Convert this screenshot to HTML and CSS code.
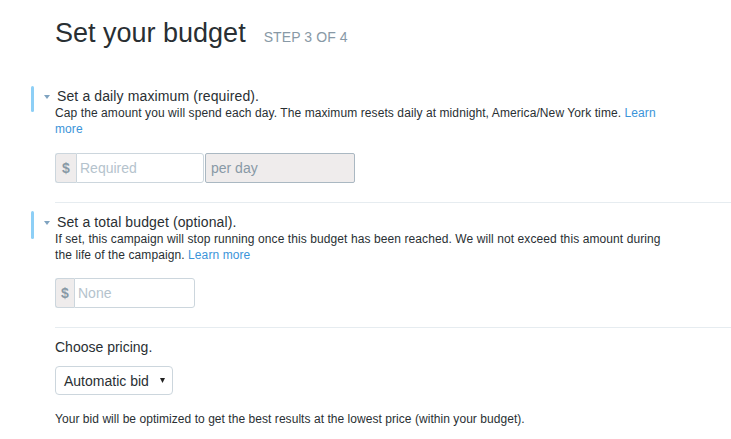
FILE: index.html
```html
<!DOCTYPE html>
<html>
<head>
<meta charset="utf-8">
<link rel="stylesheet" href="styles.css">
</head>
<body>
<div class="page">
  <div class="title-row">
    <h1 class="title">Set your budget</h1>
    <span class="step">STEP 3 OF 4</span>
  </div>

  <div class="section first">
    <div class="bar"></div>
    <div class="body">
      <div class="heading"><svg class="caret" width="6" height="4" viewBox="0 0 6 4"><path d="M0 0H6L3 4Z" fill="#7fa3c0"/></svg>Set a daily maximum (required).</div>
      <p class="desc">Cap the amount you will spend each day. The maximum resets daily at midnight, America/New York time. <a href="#">Learn more</a></p>
      <div class="input-row">
        <div class="group">
          <span class="addon">$</span>
          <span class="field w128">Required</span>
        </div>
        <span class="suffix">per day</span>
      </div>
    </div>
  </div>
  <div class="divider"></div>

  <div class="section second">
    <div class="bar"></div>
    <div class="body">
      <div class="heading"><svg class="caret" width="6" height="4" viewBox="0 0 6 4"><path d="M0 0H6L3 4Z" fill="#7fa3c0"/></svg>Set a total budget (optional).</div>
      <p class="desc">If set, this campaign will stop running once this budget has been reached. We will not exceed this amount during the life of the campaign. <a href="#">Learn more</a></p>
      <div class="input-row">
        <div class="group">
          <span class="addon">$</span>
          <span class="field w120">None</span>
        </div>
      </div>
    </div>
  </div>
  <div class="divider"></div>

  <div class="pricing">
    <div class="label">Choose pricing.</div>
    <div class="select"><span>Automatic bid</span><svg width="5" height="5" viewBox="0 0 5 5"><path d="M0 0H5L2.5 5Z" fill="#222"/></svg></div>
    <p class="note">Your bid will be optimized to get the best results at the lowest price (within your budget).</p>
  </div>
</div>
</body>
</html>
```

FILE: styles.css
```css
html, body {
  margin: 0;
  padding: 0;
  background: #fff;
}
body {
  font-family: "Liberation Sans", Arial, sans-serif;
  color: #292f33;
}
.page {
  padding: 17px 0 0 0;
}
.title-row {
  display: flex;
  align-items: baseline;
  padding-left: 55px;
}
.title {
  margin: 0;
  font-size: 27px;
  line-height: 32px;
  font-weight: normal;
  color: #292f33;
}
.step {
  margin-left: 18px;
  font-size: 14px;
  letter-spacing: 0.1px;
  color: #8899a6;
}
.section {
  display: flex;
  padding-left: 31px;
}
.section.first {
  margin-top: 37px;
}
.section.second {
  margin-top: 8px;
}
.bar {
  width: 3px;
  height: 26px;
  border-radius: 2px;
  background: #8dcff6;
  flex-shrink: 0;
}
.second .bar {
  height: 28px;
}
.body {
  margin-left: 21px;
  width: 615px;
}
.heading {
  display: flex;
  align-items: center;
  margin-top: 1px;
  margin-left: -11px;
  font-size: 14px;
  line-height: 18px;
  letter-spacing: 0.12px;
}
.second .heading {
  margin-top: 2px;
}
.caret {
  margin-right: 7px;
  margin-top: 1px;
  flex-shrink: 0;
}
.desc {
  margin: 0;
  font-size: 12px;
  line-height: 16px;
  letter-spacing: 0.09px;
}
.desc a {
  color: #3b94d9;
  text-decoration: none;
}
.input-row {
  display: flex;
  margin-top: 15px;
}
.first .input-row {
  margin-top: 16px;
}
.group {
  display: flex;
  height: 30px;
}
.addon {
  box-sizing: border-box;
  width: 21px;
  height: 30px;
  display: flex;
  align-items: center;
  justify-content: center;
  background: #efecec;
  border: 1px solid #ccd6dd;
  border-right: none;
  border-radius: 3px 0 0 3px;
  color: #8899a6;
  font-weight: bold;
  font-size: 14px;
}
.second .addon {
  width: 19px;
}
.field {
  box-sizing: border-box;
  height: 30px;
  display: flex;
  align-items: center;
  padding-left: 3px;
  background: #fff;
  border: 1px solid #ccd6dd;
  border-radius: 0 3px 3px 0;
  color: #b5c3cd;
  font-size: 14px;
}
.w128 { width: 128px; }
.w120 { width: 121px; }
.suffix {
  box-sizing: border-box;
  width: 150px;
  height: 30px;
  margin-left: 1px;
  display: flex;
  align-items: center;
  padding-left: 5px;
  background: #efecec;
  border: 1px solid #aab8c2;
  border-radius: 2px;
  color: #8899a6;
  font-size: 14px;
}
.divider {
  height: 1px;
  background: #e6ecf0;
  margin-left: 55px;
  margin-top: 19px;
}
.pricing {
  padding-left: 55px;
  margin-top: 10px;
}
.label {
  font-size: 14px;
  line-height: 18px;
}
.select {
  box-sizing: border-box;
  margin-top: 10px;
  width: 118px;
  height: 29px;
  display: flex;
  align-items: center;
  justify-content: space-between;
  padding: 0 7px 0 8px;
  border: 1px solid #ccd6dd;
  border-radius: 4px;
  font-size: 14px;
  color: #292f33;
}
.note {
  margin: 16px 0 0 0;
  font-size: 12px;
  line-height: 16px;
  letter-spacing: 0.05px;
}
```
